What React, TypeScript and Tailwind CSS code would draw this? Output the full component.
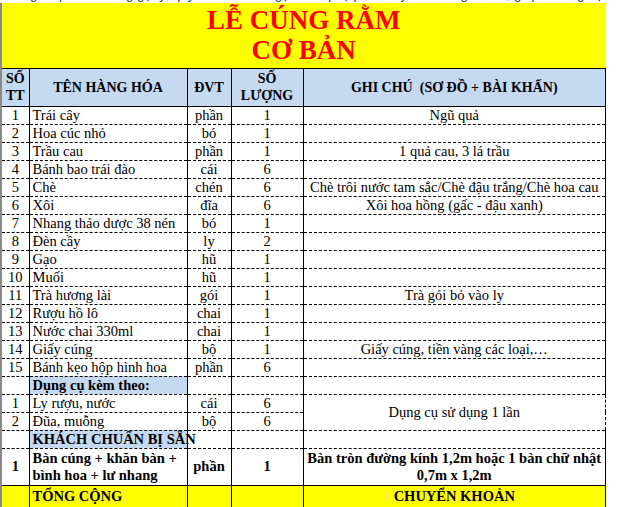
import React from 'react'

type Item = [string, string, string, string, string]

const items: Item[] = [
  ['1', 'Trái cây', 'phần', '1', 'Ngũ quả'],
  ['2', 'Hoa cúc nhỏ', 'bó', '1', ''],
  ['3', 'Trầu cau', 'phần', '1', '1 quả cau, 3 lá trầu'],
  ['4', 'Bánh bao trái đào', 'cái', '6', ''],
  ['5', 'Chè', 'chén', '6', 'Chè trôi nước tam sắc/Chè đậu trắng/Chè hoa cau'],
  ['6', 'Xôi', 'đĩa', '6', 'Xôi hoa hồng (gấc - đậu xanh)'],
  ['7', 'Nhang thảo dược 38 nén', 'bó', '1', ''],
  ['8', 'Đèn cầy', 'ly', '2', ''],
  ['9', 'Gạo', 'hũ', '1', ''],
  ['10', 'Muối', 'hũ', '1', ''],
  ['11', 'Trà hương lài', 'gói', '1', 'Trà gói bỏ vào ly'],
  ['12', 'Rượu hồ lô', 'chai', '1', ''],
  ['13', 'Nước chai 330ml', 'chai', '1', ''],
  ['14', 'Giấy cúng', 'bộ', '1', 'Giấy cúng, tiền vàng các loại,…'],
  ['15', 'Bánh kẹo hộp hình hoa', 'phần', '6', ''],
]

const cell = 'border-x border-black p-0 h-[18px] leading-[17px] whitespace-nowrap'
const row = 'border-b border-dashed border-black'

export default function App() {
  return (
    <div className="w-[618px] h-[507px] overflow-hidden bg-white text-black font-['Liberation_Serif',serif] text-[14.5px]">
      {/* cut-off line above the sheet: only descenders show */}
      <div className="h-[3px] overflow-hidden">
        <p className="-mt-[13px] pl-[30px] whitespace-nowrap text-[13px] leading-[15px] text-[#333] font-['Liberation_Sans',sans-serif]">
          gồm phần lễ cúng gợi ý, quý khách có thể gọi thêm phụ phẩm tùy nhu cầu gia đình, giúp lễ cúng trọn vẹn hơn
        </p>
      </div>

      <table className="w-[606px] table-fixed border-collapse border-l-2 border-l-[#8a8a8a]">
        <colgroup>
          <col className="w-[28px]" />
          <col className="w-[158px]" />
          <col className="w-[44px]" />
          <col className="w-[72px]" />
          <col />
        </colgroup>
        <tbody>
          {/* Title */}
          <tr className="border-b border-black">
            <td colSpan={5} className="h-[65px] p-0 bg-[#ffff00] text-center align-middle">
              <div className="text-[27px] leading-[30px] font-bold text-[#ff0000]">
                LỄ CÚNG RẰM
                <br />
                CƠ BẢN
              </div>
            </td>
          </tr>

          {/* Header */}
          <tr className="border-b border-black bg-[#c5d9f1] font-bold text-[14px] leading-[17px] text-center">
            <td className="border-x border-black p-0 h-[38px]">
              SỐ
              <br />
              TT
            </td>
            <td className="border-x border-black p-0">TÊN HÀNG HÓA</td>
            <td className="border-x border-black p-0">ĐVT</td>
            <td className="border-x border-black p-0">
              SỐ
              <br />
              LƯỢNG
            </td>
            <td className="border-x border-black p-0">GHI CHÚ&nbsp; (SƠ ĐỒ + BÀI KHẤN)</td>
          </tr>

          {items.map(([no, name, unit, qty, note]) => (
            <tr key={no + name} className={row}>
              <td className={`${cell} text-center`}>{no}</td>
              <td className={`${cell} pl-[3px]`}>{name}</td>
              <td className={`${cell} text-center`}>{unit}</td>
              <td className={`${cell} text-center`}>{qty}</td>
              <td className={`${cell} text-center`}>{note}</td>
            </tr>
          ))}

          {/* Dụng cụ kèm theo */}
          <tr className={row}>
            <td className={cell}></td>
            <td className={`${cell} pl-[3px] font-bold bg-[#c5d9f1]`}>Dụng cụ kèm theo:</td>
            <td className={cell}></td>
            <td className={cell}></td>
            <td className={cell}></td>
          </tr>
          <tr className={row}>
            <td className={`${cell} text-center`}>1</td>
            <td className={`${cell} pl-[3px]`}>Ly rượu, nước</td>
            <td className={`${cell} text-center`}>cái</td>
            <td className={`${cell} text-center`}>6</td>
            <td rowSpan={2} className={`${cell} text-center border-b border-dashed`}>
              Dụng cụ sử dụng 1 lần
            </td>
          </tr>
          <tr className={row}>
            <td className={`${cell} text-center`}>2</td>
            <td className={`${cell} pl-[3px]`}>Đũa, muỗng</td>
            <td className={`${cell} text-center`}>bộ</td>
            <td className={`${cell} text-center`}>6</td>
          </tr>

          {/* Khách chuẩn bị sẵn */}
          <tr className={row}>
            <td className={cell}></td>
            <td className={`${cell} pl-[3px] font-bold bg-[#c5d9f1]`}>KHÁCH CHUẨN BỊ SẴN</td>
            <td className={cell}></td>
            <td className={cell}></td>
            <td className={cell}></td>
          </tr>
          <tr className="border-b border-black font-bold">
            <td className="border-x border-black p-0 h-[37px] text-center">1</td>
            <td className="border-x border-black p-0 pl-[3px] leading-[17px]">
              Bàn cúng + khăn bàn +
              <br />
              bình hoa + lư nhang
            </td>
            <td className="border-x border-black p-0 text-center">phần</td>
            <td className="border-x border-black p-0 text-center">1</td>
            <td className="border-x border-black p-0 text-center leading-[17px] whitespace-nowrap">
              Bàn tròn đường kính 1,2m hoặc 1 bàn chữ nhật
              <br />
              0,7m x 1,2m
            </td>
          </tr>

          {/* Tổng cộng */}
          <tr className="bg-[#ffff00] font-bold">
            <td className="border-x border-black p-0 h-[24px]"></td>
            <td className="border-x border-black p-0 pl-[3px]">TỔNG CỘNG</td>
            <td className="border-x border-black p-0"></td>
            <td className="border-x border-black p-0"></td>
            <td className="border-x border-black p-0 text-center">CHUYỂN KHOẢN</td>
          </tr>
        </tbody>
      </table>
    </div>
  )
}
